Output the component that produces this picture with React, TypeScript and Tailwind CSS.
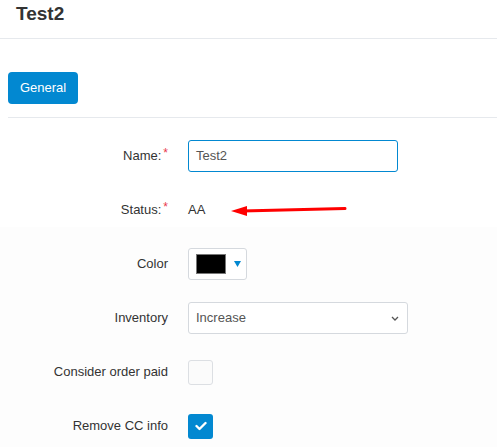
import React from "react";

const font = { fontFamily: '"Liberation Sans", Arial, sans-serif' };

function Row({ label, required, children }: { label: string; required?: boolean; children: React.ReactNode }) {
  return (
    <div className="relative flex h-[54px] items-center">
      <div className="w-[168px] shrink-0 text-right text-[13px] leading-[16px] text-[#333]">
        <span>{label}</span>
        {required && <span className="relative -top-[3px] ml-[2px] text-[12px] leading-none text-[#e8394d]">*</span>}
      </div>
      <div className="ml-[20px] flex items-center">{children}</div>
    </div>
  );
}

export default function App() {
  return (
    <div className="min-h-[447px] w-[497px] bg-white" style={font}>
      <div className="h-[39px] border-b border-[#e6e9ed] pl-[16px] pt-[1px]">
        <h1 className="text-[19px] font-bold leading-[26px] text-[#333]">Test2</h1>
      </div>
      <div className="pl-[8px] pt-[33px]">
        <button className="h-[32px] w-[70px] rounded-[4px] bg-[#0288d1] text-[13px] text-white">General</button>
        <div className="mt-[13px] h-px bg-[#e6e9ed]" />
      </div>
      <div className="bg-[linear-gradient(to_bottom,#ffffff_109px,#fdfdfd_109px)] pt-[11px]">
        <Row label="Name:" required>
          <div className="flex h-[32px] w-[210px] items-center rounded-[3px] border border-[#0288d1] bg-white px-[7px] text-[13px] text-[#555]">
            Test2
          </div>
        </Row>
        <Row label="Status:" required>
          <span className="text-[13px] text-[#333]">AA</span>
          <svg className="absolute left-[230px] top-[20px]" width="118" height="14" viewBox="0 0 118 14">
            <line x1="115" y1="5.5" x2="12" y2="8" stroke="#ff0000" strokeWidth="3" strokeLinecap="round" />
            <polygon points="1,8 17,3 17,13" fill="#ff0000" />
          </svg>
        </Row>
        <Row label="Color">
          <div className="flex h-[32px] w-[59px] items-center rounded-[3px] border border-[#d5d9de] bg-white pl-[7px]">
            <div className="h-[20px] w-[30px] border border-[#777] bg-black" />
            <svg className="ml-[8px]" width="7" height="6" viewBox="0 0 7 6">
              <polygon points="0,0 7,0 3.5,6" fill="#0288d1" />
            </svg>
          </div>
        </Row>
        <Row label="Inventory">
          <div className="flex h-[32px] w-[220px] items-center justify-between rounded-[3px] border border-[#d5d9de] bg-white pl-[7px] pr-[8px] text-[13px] text-[#555]">
            <span>Increase</span>
            <svg width="8" height="5" viewBox="0 0 8 5">
              <polyline points="1,1 4,4 7,1" fill="none" stroke="#555" strokeWidth="1.3" />
            </svg>
          </div>
        </Row>
        <Row label="Consider order paid">
          <div className="h-[25px] w-[25px] rounded-[3px] border border-[#dcdfe3] bg-[#fbfbfb]" />
        </Row>
        <Row label="Remove CC info">
          <div className="flex h-[25px] w-[25px] items-center justify-center rounded-[3px] bg-[#0288d1]">
            <svg width="12" height="10" viewBox="0 0 12 10">
              <polyline points="1.5,5 4.5,8 10.5,2" fill="none" stroke="#fff" strokeWidth="2.4" strokeLinecap="round" strokeLinejoin="round" />
            </svg>
          </div>
        </Row>
      </div>
    </div>
  );
}
